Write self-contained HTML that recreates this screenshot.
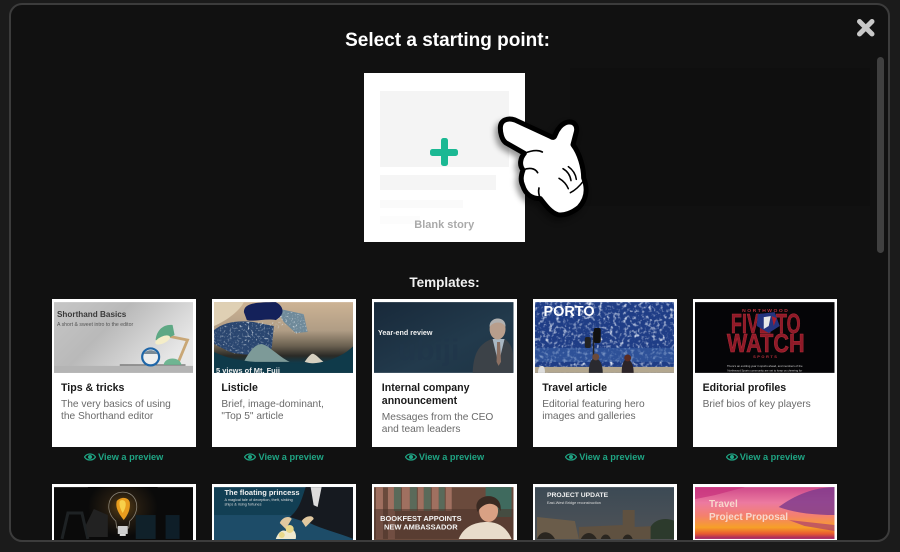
<!DOCTYPE html>
<html><head><meta charset="utf-8">
<style>
html,body{margin:0;padding:0;width:900px;height:552px;overflow:hidden;background:#1b1b1b;font-family:"Liberation Sans",sans-serif}
#frame{position:absolute;left:9px;top:3px;width:877px;height:535px;border:2.5px solid #3c3c3c;border-radius:13px;background:#111;overflow:hidden}
#in{position:absolute;left:-11.5px;top:-5.5px;width:900px;height:552px}
.a{position:absolute}
.card{position:absolute;width:144.4px;height:148.5px;background:#fff;top:299px;box-sizing:border-box}
.card svg{position:absolute;left:2px;top:3px;width:139.5px;height:71px;display:block}
.t{position:absolute;left:9.5px;top:83px;width:130px;font-size:10.6px;line-height:13px;font-weight:bold;color:#1a1a1a}
.d{font-size:10.2px;line-height:12px;font-weight:normal;color:#6a6a6a;margin-top:4px;white-space:nowrap}
.pv{position:absolute;top:450px;width:144.4px;text-align:center;color:#1fa584;font-size:9.2px;line-height:14px;font-weight:bold;white-space:nowrap}
.pv svg{vertical-align:-2px;margin-right:2px}
.r2{top:484px;height:70px}
</style></head><body>
<div id="frame"><div id="in">
<div class="a" style="left:570px;top:68px;width:300px;height:138px;background:#0f0f0f"></div>
<div class="a" style="left:0;top:29px;width:896px;text-align:center;font-size:19px;line-height:24px;font-weight:bold;color:#fff">Select a starting point:</div>

<svg class="a" style="left:855px;top:17px" width="22" height="22" viewBox="0 0 22 22"><path d="M4.500 4.500L17 17M17 4.500L4.500 17" stroke="#c8c8c8" stroke-width="5" stroke-linecap="round"/></svg>
<div class="a" style="left:877px;top:57px;width:7px;height:196px;border-radius:4px;background:#404040"></div>

<div class="a" style="left:364px;top:73px;width:161.5px;height:169px;background:#fff">
 <div class="a" style="left:16.5px;top:18px;width:128.5px;height:76px;background:#f4f4f4"></div>
 <div class="a" style="left:16.5px;top:102.5px;width:115.5px;height:14.5px;background:#f5f5f5"></div>
 <div class="a" style="left:16.5px;top:127px;width:83px;height:8px;background:#fafafa"></div>
 <div class="a" style="left:16.5px;top:143px;width:40px;height:8px;background:#fcfcfc"></div>
 <div class="a" style="left:66.7px;top:76px;width:28px;height:7px;border-radius:2.5px;background:#1bb893"></div>
 <div class="a" style="left:77.2px;top:65.500px;width:7px;height:28px;border-radius:2.500px;background:#1bb893"></div>
 <div class="a" style="left:0;top:145px;width:161.500px;text-align:center;font-size:11px;line-height:14px;font-weight:bold;color:#aaa">Blank story</div>
</div>

<svg class="a" style="left:489px;top:110px;filter:drop-shadow(-3px 4px 3px rgba(0,0,0,.4))" width="110" height="110" viewBox="0 0 330 330">
<path d="M34,54 C34,30 56,22 78,30 L186,80 C192,84 196,82 198,76 C204,60 218,38 238,36 C258,34 266,50 262,66 L252,104 C272,130 284,172 284,204 C296,234 294,266 270,292 C250,308 226,318 206,314 C186,308 170,287 154,266 C132,266 110,256 101,226 C94,212 96,196 102,180 C90,165 94,144 106,130 L50,98 C38,88 34,68 34,54Z" fill="#fff" stroke="#000" stroke-width="15" stroke-linejoin="round"/>
<g fill="none" stroke="#000" stroke-linecap="round">
<path d="M106,130 C126,122 146,118 160,126" stroke-width="5"/>
<path d="M102,180 C120,172 138,174 146,188" stroke-width="5"/>
<path d="M154,266 C148,252 148,242 150,234" stroke-width="5"/>
<path d="M222,176 C236,184 244,198 246,212" stroke-width="4.500"/>
<path d="M238,170 C252,180 260,194 262,208" stroke-width="4.500"/>
<path d="M210,205 C222,212 232,222 238,236" stroke-width="4.500"/>
<path d="M284,212 C272,228 260,240 244,248" stroke-width="4.500"/>
</g></svg>

<div class="a" style="left:0;top:275px;width:890px;text-align:center;font-size:13.500px;line-height:16px;font-weight:bold;color:#f2f2f2">Templates:</div>

<!-- row 1 -->
<div class="card" style="left:52px">
<svg viewBox="0 0 140 71"><defs><linearGradient id="g1" x1="0" y1="0" x2="1" y2=".5"><stop offset="0" stop-color="#c6c6c6"/><stop offset=".45" stop-color="#b9b9b9"/><stop offset="1" stop-color="#e8e8e8"/></linearGradient></defs>
<rect width="140" height="71" fill="url(#g1)"/><rect x="0" y="64" width="140" height="7" fill="#b4b4b4"/><rect x="66" y="62.500" width="66" height="1.200" fill="#666"/>
<text x="3" y="15" font-size="8.200" font-weight="bold" fill="#3a3a3a">Shorthand Basics</text><text x="3" y="24" font-size="5.200" fill="#555">A short &amp; sweet intro to the editor</text>
<path d="M114 34L134 38L124 62" fill="none" stroke="#c9a776" stroke-width="2.800"/>
<path d="M102 38C103 28 110 22 119 23L121 33C114 36 108 41 102 38Z" fill="#5ea884"/><ellipse cx="109" cy="38" rx="8" ry="3.500" fill="#f4edc8" transform="rotate(-25 109 38)"/>
<path d="M110 63C111 55 126 54 128 63Z" fill="#6fb592"/>
<circle cx="97" cy="55" r="8.500" fill="#eee" stroke="#1f66a8" stroke-width="2.200"/><path d="M90 52C93 47 101 47 104 52Z" fill="#7a8a96"/></svg>
<div class="t">Tips &amp; tricks<div class="d">The very basics of using<br>the Shorthand editor</div></div></div>
<div class="pv" style="left:52px"><svg width="12" height="10" viewBox="0 0 12 10"><path d="M.5 5C3 1 9 1 11.500 5C9 9 3 9 .5 5Z" fill="none" stroke="#1fa584" stroke-width="1.200"/><circle cx="6" cy="5" r="2" fill="#1fa584"/></svg>View a preview</div>

<div class="card" style="left:212.400px">
<svg viewBox="0 0 140 71"><defs><linearGradient id="g2" x1="0" y1="0" x2="0" y2="1"><stop offset="0" stop-color="#cdb394"/><stop offset=".4" stop-color="#b09d85"/><stop offset=".62" stop-color="#6a6050"/><stop offset=".76" stop-color="#2a2a26"/><stop offset=".86" stop-color="#103a4a"/><stop offset="1" stop-color="#0b3040"/></linearGradient>
<filter id="fo" x="0" y="0" width="100%" height="100%"><feTurbulence type="fractalNoise" baseFrequency=".5" numOctaves="2" seed="7"/><feColorMatrix values="0 0 0 0 .72  0 0 0 0 .78  0 0 0 0 .82  2 2 0 0 -2.150"/></filter>
<clipPath id="wv"><path d="M0 28L20 20L40 20L62 20L66 8L90 12L94 30L82 32L70 22L60 30L58 46L50 52L20 52L0 42Z"/></clipPath></defs>
<rect width="140" height="71" fill="url(#g2)"/>
<path d="M0 24C14 18 26 8 30 0L0 0Z" fill="#dfd0b4"/>
<path d="M0 28C10 20 24 18 40 20L60 24L58 46C54 54 30 54 16 50L0 42Z" fill="#2a4670"/>
<path d="M62 6L90 12L94 30L82 31L70 20Z" fill="#6f8a9a"/>
<rect width="140" height="71" filter="url(#fo)" clip-path="url(#wv)"/>
<path d="M30 10C30 2 38 0 62 0C70 4 72 12 62 18C52 16 40 20 33 18Z" fill="#14215a"/>
<path d="M30 60C36 48 42 42 48 42C56 44 64 54 76 60Z" fill="#7d9a98"/><path d="M91 60C95 54 98 51 100 52C103 53 106 57 110 60C104 62 97 62 91 60Z" fill="#d6d0c0"/>
<path d="M0 50C16 58 40 62 90 62C112 62 130 54 140 44V71H0Z" fill="#0f3a4a"/>
<text x="2" y="71" font-size="7.500" font-weight="bold" fill="#f0f0f0">5 views of Mt. Fuji</text></svg>
<div class="t">Listicle<div class="d">Brief, image-dominant,<br>"Top 5" article</div></div></div>
<div class="pv" style="left:212.400px"><svg width="12" height="10" viewBox="0 0 12 10"><path d="M.5 5C3 1 9 1 11.500 5C9 9 3 9 .5 5Z" fill="none" stroke="#1fa584" stroke-width="1.200"/><circle cx="6" cy="5" r="2" fill="#1fa584"/></svg>View a preview</div>

<div class="card" style="left:372.800px">
<svg viewBox="0 0 140 71"><defs><linearGradient id="g3" x1="0" y1="0" x2="1" y2="1"><stop offset="0" stop-color="#18293a"/><stop offset=".6" stop-color="#223a4c"/><stop offset="1" stop-color="#1e3445"/></linearGradient></defs>
<rect width="140" height="71" fill="url(#g3)"/>
<text x="24" y="58" font-size="30" font-weight="bold" fill="#20364a" opacity=".7">ubiji</text>
<path d="M99 71C100 50 106 42 118 37L125 40L131 37C136 40 139 46 139.500 52V71Z" fill="#3c4248"/>
<path d="M119 37L125 62L131 37Z" fill="#a9b8c4"/><path d="M123.500 40L126.500 40L127.500 60L125 64L123 60Z" fill="#8a6f62"/>
<ellipse cx="124" cy="27" rx="8" ry="10.500" fill="#b89e8c"/><path d="M116 25C115 14 133 13 132 25C129 19 120 19 116 25Z" fill="#b0b0b0"/>
<text x="4" y="33" font-size="7.200" font-weight="bold" fill="#f0f0f0">Year-end review</text></svg>
<div class="t">Internal company<br>announcement<div class="d">Messages from the CEO<br>and team leaders</div></div></div>
<div class="pv" style="left:372.800px"><svg width="12" height="10" viewBox="0 0 12 10"><path d="M.5 5C3 1 9 1 11.500 5C9 9 3 9 .5 5Z" fill="none" stroke="#1fa584" stroke-width="1.200"/><circle cx="6" cy="5" r="2" fill="#1fa584"/></svg>View a preview</div>

<div class="card" style="left:533.200px">
<svg viewBox="0 0 140 71"><defs><filter id="n" x="0" y="0" width="100%" height="100%"><feTurbulence type="fractalNoise" baseFrequency=".28" numOctaves="2" seed="4"/><feColorMatrix values="0 0 0 0 .72  0 0 0 0 .78  0 0 0 0 .9  2 2 0 0 -2"/></filter></defs>
<rect width="140" height="71" fill="#1f3d86"/><rect width="140" height="71" filter="url(#n)"/>
<rect y="46" width="140" height="14" fill="#3a62a8" opacity=".55"/>
<rect y="65" width="140" height="6" fill="#b3a78f"/>
<rect x="58" y="30" width="1.500" height="34" fill="#222"/><rect x="59" y="26" width="7" height="15" rx="2" fill="#111"/><rect x="50" y="35" width="6" height="11" rx="2" fill="#222"/>
<path d="M54 71C54 62 56 57 60 56C65 57 68 62 68 71Z" fill="#2a2a30"/><circle cx="61" cy="55" r="3.500" fill="#6b4a3a"/>
<path d="M87 71C87 62 89 58 92 57C96 58 99 62 99 71Z" fill="#2c2428"/><circle cx="93" cy="56" r="3.500" fill="#5a2c22"/>
<path d="M3 71C3 66 5 64 7 64C9 64 10 66 10 71Z" fill="#ddd"/>
<text x="8.500" y="14" font-size="14.500" font-weight="bold" fill="#fff">PORTO</text></svg>
<div class="t">Travel article<div class="d">Editorial featuring hero<br>images and galleries</div></div></div>
<div class="pv" style="left:533.200px"><svg width="12" height="10" viewBox="0 0 12 10"><path d="M.5 5C3 1 9 1 11.500 5C9 9 3 9 .5 5Z" fill="none" stroke="#1fa584" stroke-width="1.200"/><circle cx="6" cy="5" r="2" fill="#1fa584"/></svg>View a preview</div>

<div class="card" style="left:693.600px">
<svg viewBox="0 0 140 71"><rect width="140" height="71" fill="#050507"/>
<text x="71" y="10" text-anchor="middle" font-size="5" font-weight="bold" fill="#b8303c" letter-spacing="1.500">NORTHWOOD</text>
<text x="71" y="31" text-anchor="middle" font-size="28" font-weight="bold" fill="#8f1a28" stroke="#b8303c" stroke-width=".5" textLength="70" lengthAdjust="spacingAndGlyphs">FIVE TO</text>
<text x="71" y="50" text-anchor="middle" font-size="26" font-weight="bold" fill="#8f1a28" stroke="#b8303c" stroke-width=".5" textLength="78" lengthAdjust="spacingAndGlyphs">WATCH</text>
<path d="M63 12L80 10L85 24L74 31L62 24Z" fill="#25347e"/><path d="M69 15L76 14L74 24L69 27Z" fill="#e8e8e8"/><path d="M77 14L82 16L79 24Z" fill="#a81f30"/>
<text x="71" y="56" text-anchor="middle" font-size="4" font-weight="bold" fill="#b8303c" letter-spacing="1.500">SPORTS</text>
<text x="70" y="65" text-anchor="middle" font-size="2.800" fill="#ccc">There's an exciting year in sports ahead, and members of the</text>
<text x="70" y="69.500" text-anchor="middle" font-size="2.800" fill="#ccc">Northwood Sports community are set to keep us cheering for</text></svg>
<div class="t">Editorial profiles<div class="d">Brief bios of key players</div></div></div>
<div class="pv" style="left:693.600px"><svg width="12" height="10" viewBox="0 0 12 10"><path d="M.5 5C3 1 9 1 11.500 5C9 9 3 9 .5 5Z" fill="none" stroke="#1fa584" stroke-width="1.200"/><circle cx="6" cy="5" r="2" fill="#1fa584"/></svg>View a preview</div>

<!-- row 2 -->
<div class="card r2" style="left:52px">
<svg viewBox="0 0 140 71"><defs><radialGradient id="g6" cx=".5" cy=".5" r=".5"><stop offset="0" stop-color="#5a3f14"/><stop offset=".5" stop-color="#221a10"/><stop offset="1" stop-color="#0a0a0a"/></radialGradient></defs>
<rect width="140" height="71" fill="#0a0a0a"/><rect x="34" y="-10" width="70" height="60" fill="url(#g6)"/>
<path d="M8 52L14 26H28L34 52" fill="none" stroke="#1e2224" stroke-width="3"/>
<path d="M32 38L40 22L54 28L54 50H34Z" fill="#222"/><rect x="82" y="28" width="20" height="24" fill="#10212a"/><rect x="112" y="28" width="14" height="24" fill="#0e1e28"/>
<path d="M62 34C50 24 54 5 69 5C84 5 88 24 76 34L75 41H63Z" fill="none" stroke="#8a8478" stroke-width=".8"/>
<path d="M63 14C66 10 74 9 76 15C77 22 74 28 70 33C66 28 61 21 63 14Z" fill="#e89c1e"/><path d="M66 14C68 12 72 13 72 17C72 21 70 24 69 26C67 23 65 18 66 14Z" fill="#f8d04a"/>
<rect x="64" y="39" width="10" height="8" fill="#cfcfcf"/><rect x="66" y="47" width="6" height="2" fill="#ddd"/></svg></div>

<div class="card r2" style="left:212.400px">
<svg viewBox="0 0 140 71"><rect width="140" height="71" fill="#123f54"/><rect y="28" width="140" height="30" fill="#1d4c68"/>
<path d="M76 30C86 22 88 12 92 0H140V52C125 46 108 42 96 36C88 34 82 32 76 30Z" fill="#161a20"/><path d="M97 0H108L104 20L100 18Z" fill="#dcdcdc"/>
<path d="M66 36C68 30 76 28 78 32L72 42Z" fill="#e0c8a0"/><path d="M88 34C92 28 100 28 100 32L92 40Z" fill="#e0c8a0"/>
<path d="M62 52C64 46 68 42 72 44C76 38 84 44 82 52Z" fill="#efe9cf"/><circle cx="76" cy="42" r="4" fill="#e8d88a"/><circle cx="68" cy="48" r="3" fill="#e8d88a"/>
<text x="10.500" y="8" font-size="7.500" font-weight="bold" fill="#f0f0f0">The floating princess</text>
<text x="10.500" y="14" font-size="3.800" fill="#ddd">A magical tale of deception, theft, sinking</text><text x="10.500" y="18.500" font-size="3.800" fill="#ddd">ships &amp; rising fortunes</text></svg></div>

<div class="card r2" style="left:372.800px">
<svg viewBox="0 0 140 71"><rect width="140" height="71" fill="#6a4a3c"/>
<path d="M2 0h7v52H2zM14 0h7v52h-7zM28 0h8v24h-8zM44 0h6v24h-6zM58 0h7v24h-7zM72 0h6v24h-6z" fill="#a07060"/><path d="M20 0h7v24h-7zM36 0h7v24h-7zM50 0h7v24h-7zM65 0h6v24h-6z" fill="#5a6a5a"/>
<path d="M112 0h26v30h-26z" fill="#3f6a5e"/>
<rect x="0" y="22" width="140" height="30" fill="#4a332a" opacity=".55"/>
<path d="M85 52C90 40 100 35 114 35C126 35 134 42 138 52Z" fill="#e8dccb"/><ellipse cx="115" cy="24" rx="9.500" ry="11" fill="#d9a184"/><path d="M104 25C96 6 130 2 127 24C122 14 110 14 104 25Z" fill="#3a2a22"/>
<text x="47" y="34" text-anchor="middle" font-size="7.500" font-weight="bold" fill="#f4f4f4">BOOKFEST APPOINTS</text><text x="47" y="42.500" text-anchor="middle" font-size="7.500" font-weight="bold" fill="#f4f4f4">NEW AMBASSADOR</text></svg></div>

<div class="card r2" style="left:533.200px">
<svg viewBox="0 0 140 71"><defs><linearGradient id="g9" x1="0" y1="0" x2="0" y2="1"><stop offset="0" stop-color="#3c4a55"/><stop offset=".6" stop-color="#4c5156"/><stop offset="1" stop-color="#54504a"/></linearGradient></defs>
<rect width="140" height="71" fill="url(#g9)"/>
<path d="M2 30L40 34L44 52H2Z" fill="#6a5c4a"/><path d="M44 40L88 38V23H100V40L140 38V52H44Z" fill="#5f5140"/><path d="M116 40C120 32 132 30 140 34V52H116Z" fill="#2c3a2c"/>
<path d="M2 52C6 42 16 44 20 52ZM46 52C50 44 58 44 62 52ZM66 52C68 46 74 46 76 52ZM88 52C90 46 96 46 98 52Z" fill="#2a2620"/>
<text x="12" y="10" font-size="6.800" font-weight="bold" fill="#f0f0f0">PROJECT UPDATE</text><text x="12" y="17" font-size="3.800" fill="#ddd">East-West Bridge reconstruction</text></svg></div>

<div class="card r2" style="left:693.600px">
<svg viewBox="0 0 140 71"><defs><linearGradient id="g10" x1="0" y1="0" x2="0" y2="1"><stop offset="0" stop-color="#cf4a8a"/><stop offset=".3" stop-color="#ec7aa0"/><stop offset=".55" stop-color="#f4806e"/><stop offset=".78" stop-color="#f6a028"/><stop offset=".9" stop-color="#e85a30"/><stop offset=".98" stop-color="#a82a60"/></linearGradient></defs>
<rect width="140" height="52" fill="url(#g10)"/><path d="M84 20C100 8 120 0 140 0V28C120 28 100 26 84 20Z" fill="#7a3a8c" opacity=".8"/><path d="M94 33L140 38V44L110 39Z" fill="#a0307a" opacity=".6"/><path d="M0 0H50L20 8L0 12Z" fill="#c8307c" opacity=".7"/>
<text x="14" y="20" font-size="10" font-weight="bold" fill="#f8d8cc">Travel</text><text x="14" y="33" font-size="10" font-weight="bold" fill="#f8d8cc">Project Proposal</text></svg></div>
</div></div>
</body></html>
